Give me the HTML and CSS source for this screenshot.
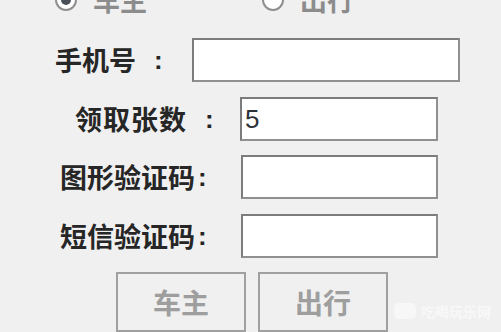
FILE: index.html
```html
<!DOCTYPE html>
<html lang="zh-CN">
<head>
<meta charset="utf-8">
<title>领取</title>
<link rel="stylesheet" href="styles.css">
</head>
<body>
<div class="panel">
  <div class="radios">
    <label class="radio radio-owner"><span class="dot checked"></span><span class="rtext">车主</span></label>
    <label class="radio radio-trip"><span class="dot"></span><span class="rtext">出行</span></label>
  </div>
  <div class="row row-phone">
    <span class="label">手机号<span class="colon colon-wide">:</span></span>
    <div class="field"></div>
  </div>
  <div class="row row-count">
    <span class="label">领取张数<span class="colon colon-wide">:</span></span>
    <div class="field"><span class="value">5</span></div>
  </div>
  <div class="row row-code">
    <span class="label">图形验证码<span class="colon">:</span></span>
    <div class="field"></div>
  </div>
  <div class="row row-code">
    <span class="label">短信验证码<span class="colon">:</span></span>
    <div class="field"></div>
  </div>
  <div class="buttons">
    <div class="btn">车主</div>
    <div class="btn">出行</div>
  </div>
  <div class="watermark"><span class="wm-logo"></span><span class="wm-text">吃喝玩乐网</span></div>
</div>
</body>
</html>
```
FILE: styles.css
```css
html, body {
  margin: 0;
  padding: 0;
  background: #f0f0f0;
}
.panel {
  position: relative;
  width: 501px;
  height: 332px;
  overflow: hidden;
  font-family: "Noto Sans CJK SC", "Liberation Sans", sans-serif;
  color: #262626;
}
.radios {
  display: flex;
  height: 22px;
  margin-top: -11px;
  padding-left: 55px;
  align-items: center;
}
.radio {
  display: flex;
  align-items: center;
}
.radio-trip {
  margin-left: 115px;
}
.dot {
  position: relative;
  width: 18px;
  height: 18px;
  border: 2px solid #8f8f8f;
  border-radius: 50%;
  background: #fff;
}
.dot.checked::after {
  content: "";
  position: absolute;
  left: 4px;
  top: 4px;
  width: 10px;
  height: 10px;
  border-radius: 50%;
  background: #4a5058;
}
.rtext {
  margin-left: 16px;
  font-size: 27px;
  font-weight: bold;
  color: #8c8c8c;
  line-height: 22px;
}
.row {
  display: flex;
  align-items: center;
  height: 44px;
}
.row-phone {
  margin-top: 27px;
  padding-left: 55px;
}
.row-count {
  margin-top: 15px;
  padding-left: 75px;
}
.row-code {
  margin-top: 14px;
  padding-left: 60px;
}
.row-code + .row-code {
  margin-top: 15px;
}
.label {
  display: flex;
  align-items: center;
  font-size: 27px;
  font-weight: bold;
  line-height: 30px;
  color: #262626;
}
.row-phone .label { width: 137px; }
.row-count .label { width: 165px; letter-spacing: 1px; }
.row-code .label { width: 181px; }
.colon {
  font-family: "Liberation Sans", sans-serif;
  font-size: 26px;
  margin-left: 3px;
}
.colon-wide {
  margin-left: 18px;
}
.field {
  box-sizing: border-box;
  height: 44px;
  background: #fff;
  border: 2px solid #909090;
  border-top-color: #7c7c7c;
  border-left-color: #7c7c7c;
  display: flex;
  align-items: center;
}
.row-phone .field { width: 268px; }
.row-count .field { width: 198px; }
.row-code .field { width: 197px; }
.value {
  font-family: "Liberation Sans", sans-serif;
  font-size: 26px;
  color: #2c3238;
  padding-left: 3px;
}
.buttons {
  display: flex;
  gap: 12px;
  margin-top: 14px;
  padding-left: 116px;
}
.btn {
  box-sizing: border-box;
  width: 130px;
  height: 60px;
  border: 2px solid #a0a0a0;
  background: #f0f0f0;
  display: flex;
  align-items: center;
  justify-content: center;
  font-size: 28px;
  font-weight: bold;
  color: #9e9e9e;
}
.watermark {
  position: absolute;
  left: 394px;
  top: 302px;
  display: flex;
  align-items: center;
  white-space: nowrap;
}
.wm-logo {
  width: 22px;
  height: 16px;
  margin-right: 5px;
  border-radius: 5px;
  background: #f7f7f7;
}
.wm-text {
  font-size: 14px;
  font-weight: bold;
  line-height: 18px;
  color: #f8f8f8;
}
```
